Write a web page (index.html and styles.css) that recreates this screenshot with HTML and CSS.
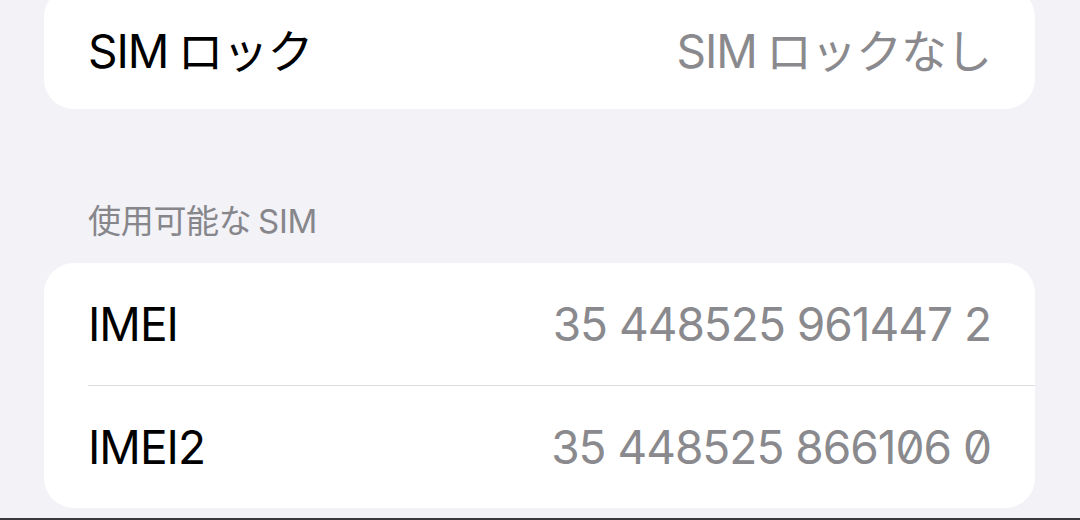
FILE: index.html
```html
<!DOCTYPE html>
<html lang="ja">

<head>
    <meta charset="UTF-8">
    <meta name="viewport" content="width=device-width, initial-scale=1.0">
    <title>情報</title>
    <link rel="stylesheet" href="styles.css">
</head>

<body>
    <main class="page">
        <section class="group group--top">
            <div class="row">
                <span class="row__label"><span class="latin">SIM</span>ロック</span>
                <span class="row__value"><span class="latin">SIM</span>ロックなし</span>
            </div>
        </section>

        <h2 class="group-title">使用可能な<span class="latin latin--after">SIM</span></h2>
        <section class="group">
            <div class="row">
                <span class="row__label">IMEI</span>
                <span class="row__value row__value--num">35 448525 961447 2</span>
            </div>
            <div class="row">
                <span class="row__label">IMEI2</span>
                <span class="row__value row__value--num">35 448525 866106 0</span>
            </div>
        </section>
    </main>
    <footer class="home-edge"></footer>
</body>
</html>
```

FILE: styles.css
```css
html,
body {
    margin: 0;
    height: 100%;
}

body {
    display: flex;
    flex-direction: column;
    background-color: #f2f2f7;
    font-family: "Inter", "Noto Sans CJK JP", sans-serif;
    color: #000;
    overflow: hidden;
}

.page {
    flex: 1;
    padding: 0 45px 0 44px;
}

.group {
    background-color: #fff;
    border-radius: 30px;
    overflow: hidden;
}

/* list is scrolled, first group starts above the top */
.group--top {
    margin-top: -13px;
}

.group-title {
    margin: 92px 0 22px 44px;
    font-size: 33px;
    line-height: 40px;
    font-weight: 400;
    color: #86868b;
    letter-spacing: -0.3px;
}

/* space between latin and kana */
.latin {
    margin-right: 0.2em;
}

.latin--after {
    margin-right: 0;
    margin-left: 0.2em;
}

.row {
    display: flex;
    justify-content: space-between;
    align-items: center;
    height: 122px;
    margin-left: 44px;
    padding-right: 44px;
    font-size: 46px;
    letter-spacing: -1px;
}

.row + .row {
    border-top: 1px solid #dedee2;
}

.row__label {
    color: #000;
}

.row__value {
    color: #8a8a8e;
}

.row__value--num {
    font-feature-settings: "zero" 1;
}

.home-edge {
    height: 12px;
    border-bottom: 2px solid #3a3a3c;
    box-sizing: border-box;
}
```
